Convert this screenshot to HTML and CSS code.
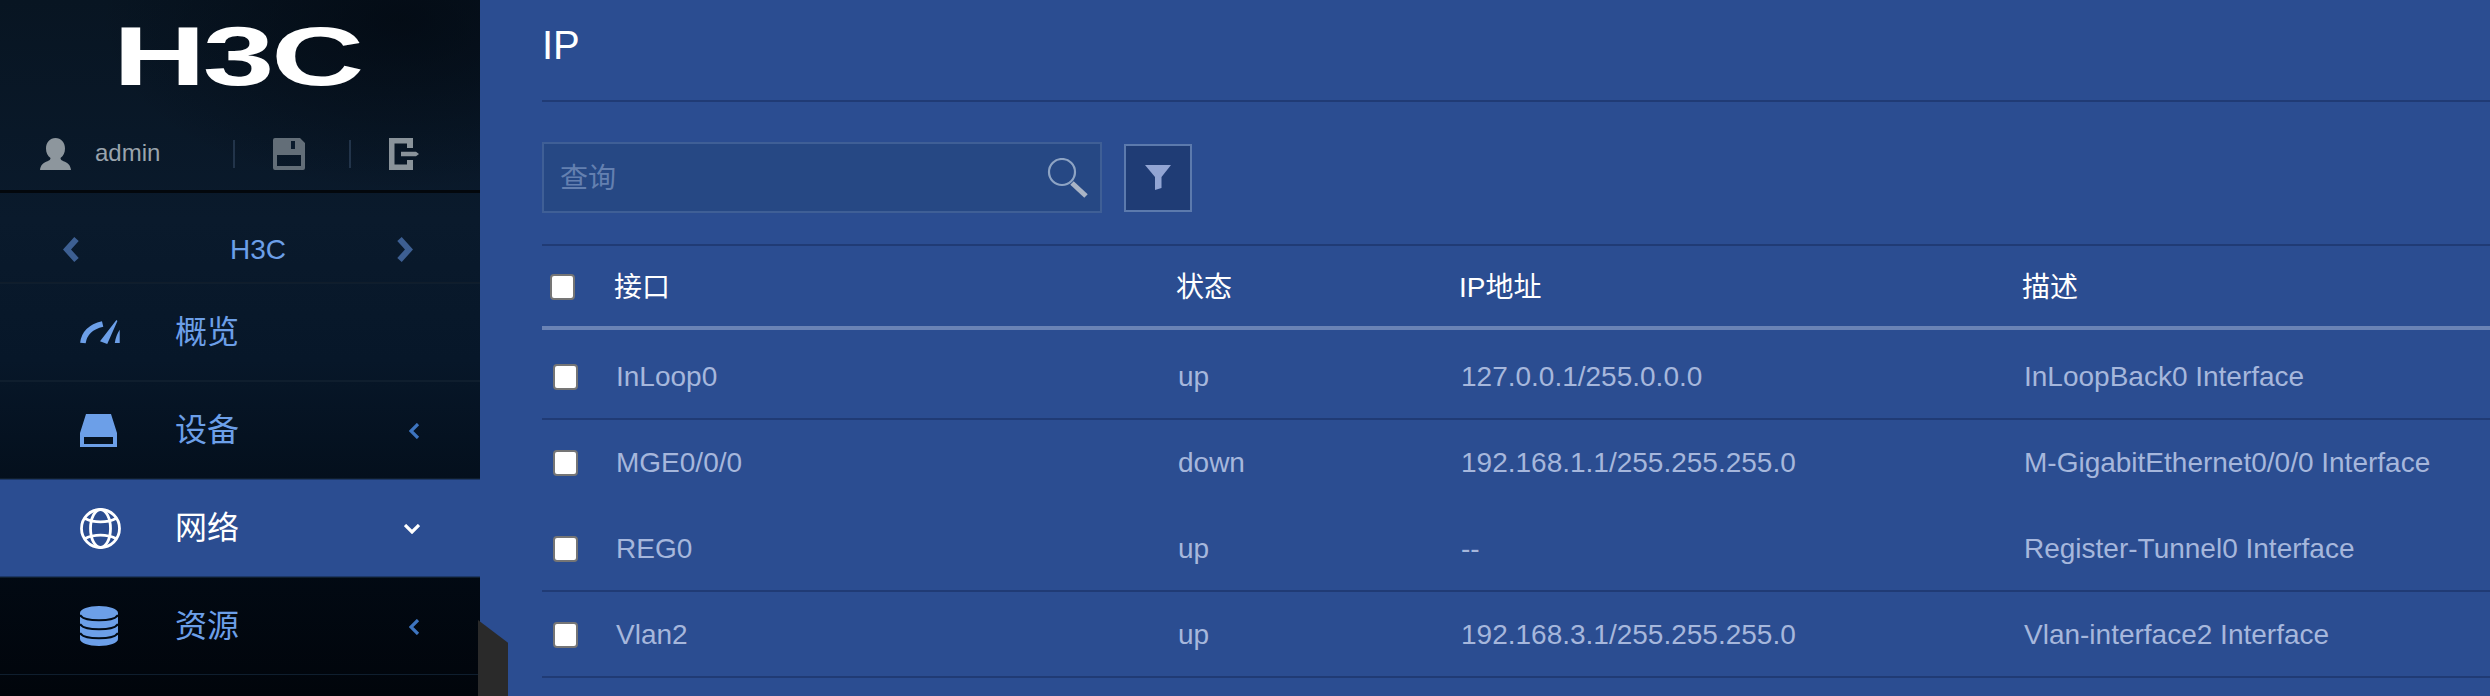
FILE: index.html
```html
<!DOCTYPE html>
<html lang="zh-CN">
<head>
    <meta charset="UTF-8">
    <title>IP</title>
    <link rel="stylesheet" href="styles.css">
</head>
<body>
<div class="page">
    <div class="side">
        <div class="logo"><span class="logoText">H3C</span></div>
        <div class="user">
            <svg class="userIcon" width="31" height="32" viewBox="0 0 31 32"><path fill="#8d969d" d="M15.5 0c5.5 0 9.5 4.5 9.5 10.5 0 4-1.6 7.5-4.5 9.5 0 1.5 1 2.5 3 3.2 4 1.4 7 3.5 7.5 8.8H0c.5-5.300 3.5-7.400 7.500-8.800 2-.7 3-1.700 3-3.200C7.600 18 6 14.500 6 10.500 6 4.500 10 0 15.500 0z"/></svg>
            <span class="userName">admin</span>
            <i class="sep"></i>
            <svg class="saveIcon" width="32" height="32" viewBox="0 0 32 32"><path fill="#636e78" fill-rule="evenodd" d="M2 0h25l5 5v25a2 2 0 0 1-2 2H2a2 2 0 0 1-2-2V2a2 2 0 0 1 2-2zM4 17v11h24V17z"/><rect x="18" y="3" width="4" height="8" fill="#0a1a2c"/></svg>
            <i class="sep sep2"></i>
            <svg class="exitIcon" width="30" height="32" viewBox="0 0 30 32"><path fill="#8a939a" d="M0 0h24v10h-6V5.500H5.500v21H18V22h6v10H0zM12 13.700h15l3 2.300-3 2.300H12z"/></svg>
        </div>
        <div class="group">
            <svg width="17" height="27" viewBox="0 0 17 27"><path class="groupArrow" d="M13.500 3 4 13.500l9.500 10.500"/></svg>
            <span class="groupName">H3C</span>
            <svg class="groupNext" width="17" height="27" viewBox="0 0 17 27"><path class="groupArrow" d="M3.500 3 13 13.500 3.500 24"/></svg>
        </div>
        <ul class="menu">
            <li class="menuItem">
                <span class="menuIcon">
                    <svg width="40" height="24" viewBox="0 0 120 73"><path fill="none" stroke="#6c9fe8" stroke-width="17" d="M8 70C12 38 34 20 68 12"/><path fill="#6c9fe8" d="M110 0l3 3-31 70-22-8zM120 30v40h-15c2-15 8-30 15-40z"/></svg>
                </span>
                <span class="menuName">概览</span>
            </li>
            <li class="menuItem">
                <span class="menuIcon">
                    <svg width="37" height="33" viewBox="0 0 37 33"><path fill="#6c9fe8" fill-rule="evenodd" d="M6 0h25l6 19v14H0V19zM4 23v7h29v-7z"/></svg>
                </span>
                <span class="menuName">设备</span>
                <svg class="menuArrow" width="11" height="16" viewBox="0 0 11 16"><path d="M9 1 2 8l7 7"/></svg>
            </li>
            <li class="menuItem active">
                <span class="menuIcon">
                    <svg width="41" height="41" viewBox="0 0 41 41" fill="none" stroke="#fff" stroke-width="2.800"><circle cx="20.500" cy="20.500" r="19"/><ellipse cx="20.500" cy="20.500" rx="10" ry="19"/><path d="M5 10.500c9 4.500 22 4.500 31 0M5 30.500c9-4.500 22-4.500 31 0"/></svg>
                </span>
                <span class="menuName">网络</span>
                <svg class="menuArrow down" width="16" height="10" viewBox="0 0 16 10"><path d="M1 1l7 7 7-7"/></svg>
            </li>
            <li class="menuItem">
                <span class="menuIcon">
                    <svg width="38" height="40" viewBox="0 0 38 40"><path fill="#6c9fe8" d="M0 7C0 3 8.500 0 19 0s19 3 19 7v26c0 4-8.500 7-19 7S0 37 0 33z"/><path fill="none" stroke="#020a14" stroke-width="2.200" d="M0 9c4 7 34 7 38 0M0 18c4 7 34 7 38 0M0 27c4 7 34 7 38 0"/></svg>
                </span>
                <span class="menuName">资源</span>
                <svg class="menuArrow" width="11" height="16" viewBox="0 0 11 16"><path d="M9 1 2 8l7 7"/></svg>
            </li>
        </ul>
    </div>
    <div class="tab"></div>
    <div class="main">
        <div class="title">IP</div>
        <div class="toolbar">
            <div class="search">
                <input class="searchInput" type="text" placeholder="查询">
                <svg class="searchIcon" width="42" height="40" viewBox="0 0 42 40"><ellipse cx="15" cy="14" rx="13" ry="13" fill="none" stroke="#8ea4c4" stroke-width="2.200"/><path d="M25 25l14 13" stroke="#a9b4c6" stroke-width="5"/></svg>
            </div>
            <div class="filterBtn">
                <svg width="26" height="25" viewBox="0 0 26 25"><path fill="#92a5d4" d="M0 0h26L16.500 12v11L10 25V12z"/></svg>
            </div>
        </div>
        <table class="ipTable">
            <colgroup>
                <col class="colCheck"><col class="colName"><col class="colState"><col class="colAddr"><col>
            </colgroup>
            <thead>
                <tr>
                    <th><input class="check" type="checkbox"></th>
                    <th>接口</th>
                    <th>状态</th>
                    <th>IP地址</th>
                    <th>描述</th>
                </tr>
            </thead>
            <tbody>
                <tr>
                    <td><input class="check" type="checkbox"></td>
                    <td>InLoop0</td>
                    <td>up</td>
                    <td>127.0.0.1/255.0.0.0</td>
                    <td>InLoopBack0 Interface</td>
                </tr>
                <tr class="noLine">
                    <td><input class="check" type="checkbox"></td>
                    <td>MGE0/0/0</td>
                    <td>down</td>
                    <td>192.168.1.1/255.255.255.0</td>
                    <td>M-GigabitEthernet0/0/0 Interface</td>
                </tr>
                <tr>
                    <td><input class="check" type="checkbox"></td>
                    <td>REG0</td>
                    <td>up</td>
                    <td>--</td>
                    <td>Register-Tunnel0 Interface</td>
                </tr>
                <tr>
                    <td><input class="check" type="checkbox"></td>
                    <td>Vlan2</td>
                    <td>up</td>
                    <td>192.168.3.1/255.255.255.0</td>
                    <td>Vlan-interface2 Interface</td>
                </tr>
            </tbody>
        </table>
    </div>
</div>
</body>
</html>
```

FILE: styles.css
```css
*{
    margin: 0;
    padding: 0;
    box-sizing: border-box;
}
body{
    font-family: "Liberation Sans", "Noto Sans CJK SC", sans-serif;
    background: #2b4d91;
    overflow: hidden;
}
.page{
    position: relative;
    display: flex;
    width: 2490px;
    height: 696px;
    overflow: hidden;
}

/* left side */
.side{
    flex: none;
    width: 480px;
    height: 696px;
    background:
        radial-gradient(ellipse 300px 170px at 400px 20px, rgba(2, 8, 16, .7), rgba(2, 8, 16, 0)),
        linear-gradient(180deg, #081522 0, #0a1a2c 220px, #071729 360px, #020a14 560px, #01050b 696px);
}
.logo{
    display: flex;
    justify-content: center;
    align-items: center;
    height: 120px;
    padding: 0 5px 8px 0;
}
.logoText{
    font-size: 83px;
    line-height: 83px;
    font-weight: bold;
    letter-spacing: -2px;
    color: #fff;
    transform: scaleX(1.55);
}
.user{
    display: flex;
    align-items: center;
    height: 73px;
    padding: 0 0 3px 40px;
    border-bottom: 3px solid #03070c;
}
.userName{
    width: 138px;
    margin-left: 24px;
    padding-bottom: 2px;
    font-size: 24px;
    color: #9aa4ad;
}
.sep{
    width: 2px;
    height: 28px;
    background: #22344a;
}
.saveIcon, .exitIcon{
    margin-left: 38px;
}
.sep2{
    margin-left: 44px;
}
.group{
    display: flex;
    align-items: center;
    height: 90px;
    padding: 24px 67px 0 63px;
    border-bottom: 1px solid #101d2b;
}
.groupArrow{
    fill: none;
    stroke: #3d5f92;
    stroke-width: 6;
}
.groupName{
    margin-left: 150px;
    font-size: 28px;
    color: #6c9fe8;
}
.groupNext{
    margin-left: auto;
}
.menu{
    list-style: none;
}
.menuItem{
    display: flex;
    align-items: center;
    height: 98px;
    padding: 0 60px 0 80px;
    border-top: 1px solid #0f1e2e;
    border-bottom: 1px solid #0f1e2e;
}
.menuIcon{
    display: flex;
    width: 95px;
}
.menuName{
    flex: 1;
    padding-bottom: 7px;
    font-size: 32px;
    color: #6c9fe8;
}
.menuArrow{
    margin-top: 2px;
}
.menuArrow path{
    fill: none;
    stroke: #3d74bf;
    stroke-width: 3.200;
}
.active{
    background: #2b4d91;
    border-color: #1d3767;
}
.active .menuName{
    color: #fff;
}
.active .menuArrow path{
    stroke: #fff;
}

/* dark corner next to the menu */
.tab{
    position: absolute;
    left: 478px;
    top: 620px;
    width: 30px;
    height: 76px;
    background: #2a2a2a;
    clip-path: polygon(0 0, 100% 30%, 100% 100%, 0 100%);
}

/* right side */
.main{
    flex: 1;
    padding-left: 62px;
    color: #a6b7dc;
}
.title{
    height: 102px;
    padding-top: 22px;
    font-size: 40px;
    line-height: 46px;
    color: #fff;
    border-bottom: 2px solid #203b75;
}
.toolbar{
    display: flex;
    align-items: center;
    height: 144px;
    padding-top: 40px;
    padding-bottom: 31px;
    border-bottom: 2px solid #203b75;
}
.search{
    display: flex;
    align-items: center;
    width: 560px;
    height: 71px;
    padding: 0 11px 0 16px;
    background: #264884;
    border: 2px solid #3f5f96;
}
.searchInput{
    flex: 1;
    height: 100%;
    padding-top: 2px;
    font: 28px "Liberation Sans", "Noto Sans CJK SC", sans-serif;
    color: #fff;
    background: none;
    border: none;
    outline: none;
}
.searchInput::placeholder{
    color: #6480b0;
    opacity: 1;
}
.filterBtn{
    display: flex;
    justify-content: center;
    align-items: center;
    width: 68px;
    height: 68px;
    margin-left: 22px;
    background: #1f3c75;
    border: 2px solid #5c7aad;
}
.ipTable{
    width: 1948px;
    table-layout: fixed;
    border-collapse: separate;
    border-spacing: 0;
    font-size: 28px;
    text-align: left;
}
.colCheck{
    width: 72px;
}
.colName{
    width: 562px;
}
.colState{
    width: 283px;
}
.colAddr{
    width: 563px;
}
.ipTable th{
    height: 84px;
    padding-bottom: 2px;
    font-weight: normal;
    color: #fff;
    border-bottom: 4px solid #6a83b5;
}
.ipTable th:first-child{
    padding-left: 8px;
}
.ipTable th .check{
    margin-top: 4px;
}
.ipTable td{
    height: 86px;
    padding: 2px 0 0 2px;
    border-bottom: 2px solid #203b75;
}
.ipTable td:first-child{
    padding-left: 11px;
}
.ipTable tbody tr:first-child td{
    height: 90px;
    padding-top: 6px;
}
.ipTable .noLine td{
    border-bottom-color: transparent;
}
.check{
    display: block;
    width: 25px;
    height: 26px;
    appearance: none;
    background: #fff;
    border: 2px solid #757575;
    border-radius: 4px;
}
```
